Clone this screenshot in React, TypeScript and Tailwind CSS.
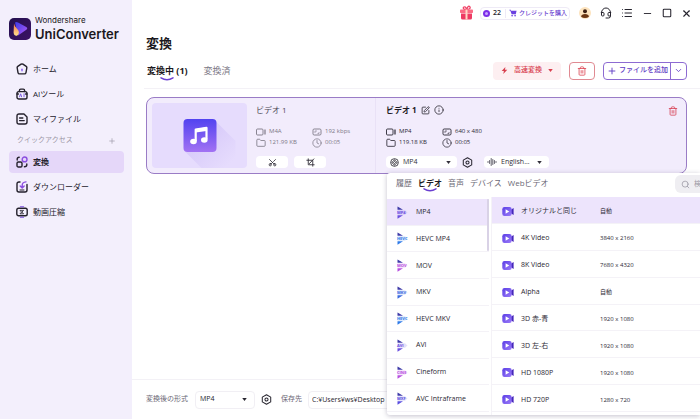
import { useState, type ReactNode } from 'react'
import { ChevronDown, Clock, Folder, Headset, Info, List, Minus, Plus, Scissors, Search, Square, SquarePen, Trash2, X } from 'lucide-react'

interface NavItem {
  label: string
  icon: ReactNode
}

interface MediaInfo {
  format: string
  size: string
  detail: string
  duration: string
}

const stroke = { fill: 'none', stroke: 'currentColor', strokeWidth: 1.4, strokeLinecap: 'round', strokeLinejoin: 'round' } as const

function HomeIcon() {
  return (
    <svg viewBox="0 0 12 12" className="size-3" {...stroke}>
      <path d="M5.1 1.2 1.8 3.4Q1 4 1.2 5L2 9.6Q2.3 10.9 3.4 10.9h5.2Q9.7 10.9 10 9.6L10.8 5Q11 4 10.2 3.4L6.9 1.2Q6 .7 5.1 1.2Z" />
      <path d="M6 6.2v1.6" stroke="#8b5cf6" />
    </svg>
  )
}

function ToolsIcon() {
  return (
    <svg viewBox="0 0 12 12" className="size-3" {...stroke}>
      <path d="M3.4 3.6V2.4Q3.4 1.1 4.7 1.1h2.6Q8.6 1.1 8.6 2.4v1.2" />
      <rect x="1" y="3.6" width="10" height="7.4" rx="1.8" />
      <path d="m3.6 8.8 1-3 1 3M8 5.8v3" stroke="#7c5ce0" strokeWidth="1" />
      <path d="M1 6h1.4M9.6 6H11" />
    </svg>
  )
}

function FilesIcon() {
  return (
    <svg viewBox="0 0 12 12" className="size-3" {...stroke}>
      <path d="M3 1h5l3 3v5q0 2-2 2H3Q1 11 1 9V3q0-2 2-2Z" />
      <path d="M3.6 5h3.2M3.6 7.6h4.6" />
    </svg>
  )
}

function ConvertIcon() {
  return (
    <svg viewBox="0 0 12 12" className="size-3" {...stroke}>
      <rect x="1" y="6" width="5" height="5" rx="1.3" />
      <circle cx="8.6" cy="3.4" r="2.4" stroke="#8b4fe0" />
      <path d="M1.2 4V3q0-1.8 2-1.8M10.8 8v.8q0 2-2.4 2" />
    </svg>
  )
}

function DownloadIcon() {
  return (
    <svg viewBox="0 0 12 12" className="size-3" {...stroke}>
      <path d="M4 1H3Q1 1 1 3v6q0 2 2 2h6q2 0 2-2V3.4" />
      <path d="M10 .9Q6.2 1.3 6.2 4.2v2.4M4.2 5l2 2 2-2" stroke="#8b4fe0" />
      <path d="M4 9h4" strokeWidth="1" />
    </svg>
  )
}

function CompressIcon() {
  return (
    <svg viewBox="0 0 12 12" className="size-3" {...stroke}>
      <rect x=".8" y="2.2" width="10.4" height="7.6" rx="1.8" />
      <path d="M4.4.8h3.2M4.4 11.2h3.2" stroke="#7c4fe0" strokeWidth="1.1" />
      <path d="M4.4 4.4h3.2L6 6ZM4.4 7.8h3.2L6 6.2Z" strokeWidth=".8" />
    </svg>
  )
}

function Logo() {
  return (
    <svg viewBox="0 0 22 22" className="size-[22px] shrink-0">
      <defs>
        <linearGradient id="logo-bg" x1="0" y1="0" x2="1" y2="1">
          <stop offset="0" stopColor="#23104f" />
          <stop offset="1" stopColor="#3c1265" />
        </linearGradient>
        <linearGradient id="logo-play" x1="0" y1="0" x2="1" y2="1">
          <stop offset="0" stopColor="#3b39e8" />
          <stop offset="1" stopColor="#b35cf5" />
        </linearGradient>
        <linearGradient id="logo-flame" x1="0" y1="0" x2="0" y2="1">
          <stop offset="0" stopColor="#f2744e" />
          <stop offset="1" stopColor="#ffe08c" />
        </linearGradient>
      </defs>
      <rect width="22" height="22" rx="5" fill="url(#logo-bg)" />
      <path d="M6 4.6Q7.2 3.600 9 4.500l8.300 4.600q1.900 1.300 0 2.700L9 17.500Z" fill="url(#logo-play)" />
      <path d="M5 5.500Q5.400 8.500 8.300 11q3.400 3.800-.3 6.700Q5 18.200 4.600 14.500Z" fill="url(#logo-flame)" />
    </svg>
  )
}

function GiftIcon() {
  return (
    <svg viewBox="0 0 16 16" className="size-4">
      <path d="M7.5 4.500Q3.500 4.500 4.500 2.200 6.500.8 7.700 4.500 9-.2 11 1.900q1 2.400-3.500 2.600Z" fill="none" stroke="#f04468" strokeWidth="1.3" />
      <rect x="1" y="4.5" width="13" height="3.5" rx=".8" fill="#fb6a84" />
      <path d="M2 8.400h11V13q0 1.500-1.500 1.500h-8Q2 14.500 2 13Z" fill="#ee3b63" />
      <path d="M6.500 4.500h2v10h-2Z" fill="#ffd9c7" />
    </svg>
  )
}

function CartIcon() {
  return (
    <svg viewBox="0 0 10 10" className="size-2" fill="#6a3fe0">
      <path d="M.5.8h1.700l.5 1.400h6.800L8.400 6.500H3.300L1.600 1.800H.5Z" />
      <circle cx="3.9" cy="8.3" r="1" />
      <circle cx="7.6" cy="8.3" r="1" />
    </svg>
  )
}

function CameraIcon() {
  return (
    <svg viewBox="0 0 10 8" className="h-2 w-[10px] shrink-0" fill="none" stroke="currentColor" strokeWidth=".9">
      <rect x=".5" y="1" width="6.5" height="6" rx="1" />
      <path d="M9 1.500v5" strokeWidth="1.2" />
    </svg>
  )
}

function RatioIcon() {
  return (
    <svg viewBox="0 0 10 8" className="h-2 w-[10px] shrink-0" fill="none" stroke="currentColor" strokeWidth=".9">
      <rect x="1" y="1" width="8" height="6" rx="1.2" />
      <path d="M3 5V3h2M7 4v1.500H5.500" strokeWidth=".6" />
    </svg>
  )
}

function HexIcon() {
  return (
    <svg viewBox="0 0 12 12" className="size-[11px] shrink-0" fill="none" stroke="#26242e" strokeWidth="1.1" strokeLinejoin="round">
      <path d="M6 .8 10.600 3.400v5.200L6 11.200 1.400 8.600V3.400Z" />
      <circle cx="6" cy="6" r="1.7" />
    </svg>
  )
}

function ReelIcon() {
  return (
    <svg viewBox="0 0 10 10" className="size-[9px] shrink-0" fill="none" stroke="#26242e" strokeWidth=".9">
      <circle cx="5" cy="5" r="4.3" />
      <circle cx="5" cy="2.9" r=".9" />
      <circle cx="5" cy="7.1" r=".9" />
      <circle cx="2.9" cy="5" r=".9" />
      <circle cx="7.1" cy="5" r=".9" />
    </svg>
  )
}

function WaveIcon() {
  return (
    <svg viewBox="0 0 10 10" className="size-[10px] shrink-0" fill="none" stroke="#55525f" strokeWidth=".9" strokeLinecap="round">
      <path d="M1 4.500v1M2.600 3.500v3M4.200 1.500v7M5.800 2.500v5M7.400 3.500v3M9 4.500v1" />
    </svg>
  )
}

function CropIcon() {
  return (
    <svg viewBox="0 0 10 10" className="size-[9px]" fill="none" stroke="#33303b" strokeWidth="1">
      <path d="M2.500.500v7H9.500M.500 2.500h7v7M3.500 6.500l5.500-5.800" />
    </svg>
  )
}

function MusicTile() {
  return (
    <svg viewBox="0 0 96 65" className="h-full w-full" preserveAspectRatio="xMidYMid slice">
      <defs>
        <linearGradient id="tile" x1="0" y1="0" x2="0" y2="1">
          <stop offset="0" stopColor="#5243f0" />
          <stop offset="1" stopColor="#a272f3" />
        </linearGradient>
        <linearGradient id="tile-shade" x1="0" y1="0" x2="1" y2="1">
          <stop offset=".4" stopColor="#cdbdf7" />
          <stop offset=".9" stopColor="#e6dcfd" />
        </linearGradient>
      </defs>
      <path d="M63 17 84 38v27H50L33 48Z" fill="url(#tile-shade)" opacity=".5" />
      <rect x="32" y="16" width="33" height="33" rx="4" fill="url(#tile)" />
      <path d="M44.200 38V26.500L55 24.800v11.500" fill="none" stroke="#fff" strokeWidth="2.2" strokeLinejoin="round" />
      <path d="M44.200 26 55 24.300v3.600l-10.800 1.700Z" fill="#fff" />
      <ellipse cx="42" cy="38.5" rx="3.3" ry="2.8" fill="#fff" />
      <ellipse cx="52.8" cy="37" rx="3.3" ry="2.8" fill="#fff" />
    </svg>
  )
}

// striped play mark shown next to each container format
function FormatIcon({ tag, color }: { tag: string; color: string }) {
  return (
    <svg viewBox="0 0 12 13" className="h-[13px] w-3 shrink-0">
      <path d="M1.500.500 7 3.800H1.500Z" fill="#3e3aa8" />
      <path d="M1.500 9.300H7L1.500 12.700Z" fill={color} />
      <path d="M1.500 4.300H9l2.500 2.200L9 8.800H1.500Z" fill={color} opacity=".18" />
      <text x="1" y="8.1" fontSize="4" fontWeight="700" fill={color}>{tag}</text>
    </svg>
  )
}

function VideoIcon() {
  return (
    <svg viewBox="0 0 12 11" className="h-[11px] w-3 shrink-0">
      <defs>
        <linearGradient id="cam" x1="0" y1="0" x2="1" y2="1">
          <stop offset="0" stopColor="#5a3ee6" />
          <stop offset="1" stopColor="#9b7bf8" />
        </linearGradient>
      </defs>
      <path d="M8.500 4 11.600 2v7L8.500 7Z" fill="#4527b8" />
      <rect x=".3" y="1" width="9.4" height="9" rx="2.2" fill="url(#cam)" />
      <path d="M3.600 3.300 7.300 5.500 3.600 7.700Z" fill="#fff" />
    </svg>
  )
}

function Smile() {
  return (
    <svg viewBox="0 0 14 4" className="absolute top-full left-1/2 h-1 w-[14px] -translate-x-1/2" fill="none" stroke="#6a3fd0" strokeWidth="1.5" strokeLinecap="round">
      <path d="M1 .8Q7 4.500 13 .8" />
    </svg>
  )
}

function Caret({ className = '' }: { className?: string }) {
  return (
    <svg viewBox="0 0 6 4" className={`pointer-events-none h-[3px] w-[5px] shrink-0 ${className}`} fill="currentColor">
      <path d="M0 0h6L3 4Z" />
    </svg>
  )
}

const mainNav: NavItem[] = [
  { label: 'ホーム', icon: <HomeIcon /> },
  { label: 'AIツール', icon: <ToolsIcon /> },
  { label: 'マイファイル', icon: <FilesIcon /> },
]

const quickNav: NavItem[] = [
  { label: '変換', icon: <ConvertIcon /> },
  { label: 'ダウンローダー', icon: <DownloadIcon /> },
  { label: '動画圧縮', icon: <CompressIcon /> },
]

const formats = [
  { name: 'MP4', tag: 'MP4', color: '#6b4fe0' },
  { name: 'HEVC MP4', tag: 'HEVC', color: '#2f7be8' },
  { name: 'MOV', tag: 'MOV', color: '#b74fe0' },
  { name: 'MKV', tag: 'MKV', color: '#3b6be0' },
  { name: 'HEVC MKV', tag: 'HEVC', color: '#2f7be8' },
  { name: 'AVI', tag: 'AVI', color: '#6b4fe0' },
  { name: 'Cineform', tag: 'CINE', color: '#b74fe0' },
  { name: 'AVC Intraframe', tag: 'MXF', color: '#5a4fe0' },
]

const presets = [
  { name: 'オリジナルと同じ', resolution: '自動' },
  { name: '4K Video', resolution: '3840 x 2160' },
  { name: '8K Video', resolution: '7680 x 4320' },
  { name: 'Alpha', resolution: '自動' },
  { name: '3D 赤-青', resolution: '1920 x 1080' },
  { name: '3D 左-右', resolution: '1920 x 1080' },
  { name: 'HD 1080P', resolution: '1920 x 1080' },
  { name: 'HD 720P', resolution: '1280 x 720' },
]

const popupTabs = ['履歴', 'ビデオ', '音声', 'デバイス', 'Webビデオ']

function NavLink({ item, active, onSelect }: { item: NavItem; active: boolean; onSelect: () => void }) {
  return (
    <a
      href="#"
      onClick={onSelect}
      className={`flex h-[22px] items-center gap-[5px] rounded px-[7px] text-[8px] text-[#24212c] ${active ? 'bg-[#e5d7f9] font-bold' : ''}`}
    >
      {item.icon}
      <span>{item.label}</span>
    </a>
  )
}

function Sidebar() {
  const [current, setCurrent] = useState('変換')

  return (
    <aside className="flex w-[132px] shrink-0 flex-col bg-[#f3effc] pr-2 pl-[9px]">
      <div className="flex items-center gap-1 pt-[15px]">
        <Logo />
        <div className="font-['Inter',sans-serif] text-[#1b1820]">
          <p className="text-[8px] leading-[11px]">Wondershare</p>
          <p className="text-[13px] leading-[16px] font-semibold">UniConverter</p>
        </div>
      </div>
      <nav className="mt-4 flex flex-col gap-[3px]">
        {mainNav.map((item) => (
          <NavLink key={item.label} item={item} active={current === item.label} onSelect={() => setCurrent(item.label)} />
        ))}
        <div className="flex h-[15px] items-center justify-between px-2 text-[7px] text-[#9c98a6]">
          <span>クイックアクセス</span>
          <button type="button" aria-label="追加">
            <Plus size={8} strokeWidth={2} />
          </button>
        </div>
        {quickNav.map((item) => (
          <NavLink key={item.label} item={item} active={current === item.label} onSelect={() => setCurrent(item.label)} />
        ))}
      </nav>
    </aside>
  )
}

function TopBar() {
  return (
    <header className="flex h-[26px] items-center justify-end pr-2 text-[#26242e]">
      <button type="button" aria-label="ギフト"><GiftIcon /></button>
      <div className="mr-[9px] ml-[5px] flex h-[13px] items-center rounded-sm border border-[#eeeaf6] px-[2px]">
        <span className="mr-[3px] flex size-[7px] items-center justify-center rounded-full bg-[#7c2ee8]">
          <span className="size-[3px] rounded-full bg-[#c9a4ff]" />
        </span>
        <span className="text-[7px] font-semibold">22</span>
        <a href="#" className="ml-1 flex items-center gap-[2px] border-l border-[#eeeaf6] pl-[3px] text-[6px] font-medium text-[#6a3fd0]">
          <CartIcon />
          クレジットを購入
        </a>
      </div>
      <div className="flex items-center gap-[9px]">
        <button type="button" aria-label="アカウント">
          <svg viewBox="0 0 12 12" className="size-3">
            <circle cx="6" cy="6" r="6" fill="#fde3bd" />
            <circle cx="6" cy="4.3" r="2" fill="#3d2013" />
            <path d="M2 9.500Q2.500 7 6 7t4 2.500Q8.500 11 6 11T2 9.500Z" fill="#6a3512" />
          </svg>
        </button>
        <button type="button" aria-label="サポート"><Headset size={12} strokeWidth={2} /></button>
        <button type="button" aria-label="メニュー"><List size={12} strokeWidth={2} /></button>
        <button type="button" aria-label="最小化"><Minus size={11} strokeWidth={2} /></button>
        <button type="button" aria-label="最大化"><Square size={10} strokeWidth={2.5} /></button>
        <button type="button" aria-label="閉じる"><X size={11} strokeWidth={2.5} /></button>
      </div>
    </header>
  )
}

function Actions() {
  return (
    <div className="flex items-center gap-2">
      <button type="button" className="flex h-[18px] items-center gap-[6px] rounded bg-[#fdeff1] px-2 text-[7px] font-medium text-[#d8404f]">
        <svg viewBox="0 0 8 8" className="size-[7px]" fill="currentColor">
          <path d="M5 0 .8 4.700h2.500L2.600 8l4.600-4.900H4.600Z" />
        </svg>
        高速変換
        <Caret />
      </button>
      <button type="button" aria-label="すべて削除" className="flex h-[18px] w-[26px] items-center justify-center rounded border border-[#e08a92] text-[#dd4a58]">
        <Trash2 size={10} strokeWidth={2} />
      </button>
      <div className="flex h-[18px] items-center rounded border border-[#8d6bd2] text-[#5f3cc4]">
        <button type="button" className="flex items-center gap-[2px] pr-[2px] pl-[3px] text-[7px] font-medium">
          <Plus size={10} strokeWidth={2.2} />
          ファイルを追加
        </button>
        <button type="button" aria-label="その他" className="flex h-full items-center border-l border-[#8d6bd2] px-[3px]">
          <ChevronDown size={9} strokeWidth={2.2} />
        </button>
      </div>
    </div>
  )
}

function MediaStats({ info, className = '' }: { info: MediaInfo; className?: string }) {
  return (
    <div className={`mt-[10px] grid w-fit grid-cols-[56px_auto] text-[6px] leading-[11px] ${className}`}>
      <span className="flex items-center gap-[3px]"><CameraIcon />{info.format}</span>
      <span className="flex items-center gap-[3px]"><RatioIcon />{info.detail}</span>
      <span className="flex items-center gap-[3px]"><Folder size={10} strokeWidth={2} />{info.size}</span>
      <span className="flex items-center gap-[3px]"><Clock size={10} strokeWidth={1.8} />{info.duration}</span>
    </div>
  )
}

function TaskCard() {
  return (
    <article className="flex h-[77px] rounded-lg border border-[#9a7cc6] bg-[#f2ecfc]">
      <div className="my-[5px] ml-[5px] w-[95px] shrink-0 overflow-hidden rounded bg-[#e6dcfd]">
        <MusicTile />
      </div>
      <div className="ml-[9px] w-[119px] shrink-0 pt-[6px]">
        <h2 className="text-[8px] leading-[12px] text-[#4c4956]">ビデオ 1</h2>
        <MediaStats info={{ format: 'M4A', size: '121.99 KB', detail: '192 kbps', duration: '00:05' }} className="text-[#7d7986]" />
        <div className="mt-2 flex gap-[6px]">
          <button type="button" aria-label="カット" className="flex h-3 w-8 items-center justify-center rounded-sm bg-white text-[#33303b]">
            <Scissors size={9} strokeWidth={2.2} className="-rotate-90" />
          </button>
          <button type="button" aria-label="切り抜き" className="flex h-3 w-8 items-center justify-center rounded-sm bg-white">
            <CropIcon />
          </button>
        </div>
      </div>
      <div className="flex min-w-0 flex-1 justify-between border-l border-[#e9e1f6] pt-[6px] pr-2 pl-[10px]">
        <div>
          <div className="flex items-center gap-1 text-[#1f1c26]">
            <h2 className="text-[8px] leading-[12px] font-bold">ビデオ 1</h2>
            <button type="button" aria-label="名前を変更"><SquarePen size={9} strokeWidth={2} /></button>
            <button type="button" aria-label="情報"><Info size={10} strokeWidth={1.8} /></button>
          </div>
          <MediaStats info={{ format: 'MP4', size: '119.18 KB', detail: '640 x 480', duration: '00:05' }} className="text-[#2b2834]" />
          <div className="mt-2 flex items-center gap-[5px] text-[7px] text-[#33303b]">
            <label className="flex h-3 w-[71px] items-center rounded-sm bg-white pl-1">
              <ReelIcon />
              <select aria-label="出力形式" className="w-full appearance-none pl-1 outline-none">
                <option>MP4</option>
              </select>
              <Caret className="mr-[6px]" />
            </label>
            <button type="button" aria-label="設定"><HexIcon /></button>
            <label className="ml-[6px] flex h-3 w-[65px] items-center rounded-sm bg-white pl-[3px]">
              <WaveIcon />
              <select aria-label="音声トラック" className="w-full appearance-none pl-1 outline-none">
                <option>English...</option>
              </select>
              <Caret className="mr-[7px]" />
            </label>
          </div>
        </div>
        <button type="button" aria-label="削除" className="mt-[2px] self-start text-[#d8475a]">
          <Trash2 size={10} strokeWidth={2} />
        </button>
      </div>
    </article>
  )
}

function FormatPopup() {
  const [tab, setTab] = useState('ビデオ')
  const [format, setFormat] = useState('MP4')
  const [preset, setPreset] = useState('オリジナルと同じ')

  return (
    <div className="absolute top-[76px] right-0 left-[255px] overflow-hidden rounded-l-[3px] bg-white text-[#2b2834] shadow-[0_1px_5px_rgba(60,50,90,0.3)]">
      <div className="flex h-[24px] justify-between pl-[9px]">
        <div className="flex items-center gap-[6px] pb-[5px] text-[8px] leading-[11px]">
          {popupTabs.map((name) => (
            <button
              key={name}
              type="button"
              onClick={() => setTab(name)}
              className={`relative whitespace-nowrap ${tab === name ? 'font-bold text-[#1f1c26]' : 'text-[#6b6875]'}`}
            >
              {name}
              {tab === name && <Smile />}
            </button>
          ))}
        </div>
        <label className="mt-[2px] flex h-[18px] w-[25px] shrink-0 items-center gap-1 overflow-hidden rounded-l-md bg-[#efeef2] pl-[6px] text-[#9a97a3]">
          <Search size={9} strokeWidth={2} className="shrink-0" />
          <input type="search" aria-label="検索" placeholder="検索" className="w-8 shrink-0 bg-transparent text-[7px] outline-none placeholder:text-[#9a97a3]" />
        </label>
      </div>
      <div className="flex h-[218px] text-[7px] leading-[10px]">
        <ul className="relative flex w-[102px] shrink-0 flex-col pt-[2px] pb-[3px]">
          {formats.map((f) => (
            <li key={f.name} className="flex-1 border-b border-[#f4f2f7]">
              <button
                type="button"
                onClick={() => setFormat(f.name)}
                className={`flex h-full w-full items-center gap-2 pt-px pl-[9px] ${format === f.name ? 'bg-[#ede4fc]' : ''}`}
              >
                <FormatIcon tag={f.tag} color={f.color} />
                {f.name}
              </button>
            </li>
          ))}
          <li aria-hidden="true" className="absolute top-[2px] right-0 h-[52px] w-[2px] rounded bg-[#d9d2e6]" />
        </ul>
        <ul className="ml-[2px] flex flex-1 flex-col border-l border-[#f4f2f7] pb-[3px]">
          {presets.map((p) => (
            <li key={p.name} className="flex-1 border-b border-[#f4f2f7]">
              <button
                type="button"
                onClick={() => setPreset(p.name)}
                className={`grid h-full w-full grid-cols-[19px_79px_1fr] items-center pt-[3px] pl-[10px] text-left ${preset === p.name ? 'bg-[#ede4fc]' : ''}`}
              >
                <VideoIcon />
                <span>{p.name}</span>
                <span className="text-[6px]">{p.resolution}</span>
              </button>
            </li>
          ))}
        </ul>
      </div>
    </div>
  )
}

function Footer() {
  return (
    <footer className="mt-auto flex h-10 items-center border-t border-[#f3f1f6] pl-[14px] text-[7px] text-[#6b6875]">
      <label htmlFor="output-format">変換後の形式</label>
      <div className="ml-[7px] flex h-[18px] w-[60px] items-center rounded border border-[#f1eff4] text-[#26242e]">
        <select id="output-format" className="w-full appearance-none pl-1 outline-none">
          <option>MP4</option>
        </select>
        <Caret className="mr-[7px]" />
      </div>
      <button type="button" aria-label="形式の設定" className="ml-[6px]"><HexIcon /></button>
      <label htmlFor="output-path" className="ml-[9px]">保存先</label>
      <input
        id="output-path"
        defaultValue="C:¥Users¥ws¥Desktop"
        className="ml-[6px] h-[18px] w-[120px] rounded border border-[#f1eff4] pl-[3px] text-[7px] text-[#26242e] outline-none"
      />
    </footer>
  )
}

export default function App() {
  return (
    <div lang="ja" className="flex min-h-screen overflow-hidden bg-white font-['Open_Sans','Noto_Sans_CJK_JP',sans-serif]">
      <Sidebar />
      <main className="flex min-w-0 flex-1 flex-col">
        <TopBar />
        <h1 className="mt-[7px] pl-[14px] text-[13px] leading-[20px] font-semibold text-[#1b1820]">変換</h1>
        <div className="ml-3 flex h-[36px] items-center justify-between border-b border-[#f3f1f6] pr-[13px] pl-[3px]">
          <div className="flex gap-4 text-[9px] leading-[13px]">
            <button type="button" className="relative font-bold text-[#1b1820]">
              変換中 (1)
              <Smile />
            </button>
            <button type="button" className="text-[#7d7986]">変換済</button>
          </div>
          <Actions />
        </div>
        <section className="relative mt-2 pr-[13px] pl-[14px]">
          <TaskCard />
          <FormatPopup />
        </section>
        <Footer />
      </main>
    </div>
  )
}
